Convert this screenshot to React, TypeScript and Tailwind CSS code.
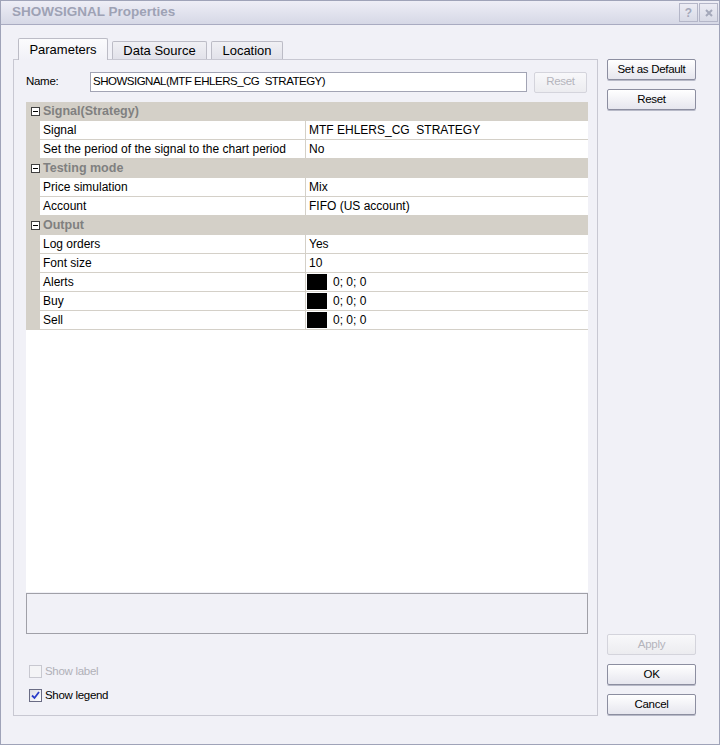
import React from "react";

interface PropRow {
  name: string;
  value: string;
  color?: boolean;
}

interface PropGroup {
  title: string;
  rows: PropRow[];
}

const groups: PropGroup[] = [
  {
    title: "Signal(Strategy)",
    rows: [
      { name: "Signal", value: "MTF EHLERS_CG  STRATEGY" },
      { name: "Set the period of the signal to the chart period", value: "No" },
    ],
  },
  {
    title: "Testing mode",
    rows: [
      { name: "Price simulation", value: "Mix" },
      { name: "Account", value: "FIFO (US account)" },
    ],
  },
  {
    title: "Output",
    rows: [
      { name: "Log orders", value: "Yes" },
      { name: "Font size", value: "10" },
      { name: "Alerts", value: "0; 0; 0", color: true },
      { name: "Buy", value: "0; 0; 0", color: true },
      { name: "Sell", value: "0; 0; 0", color: true },
    ],
  },
];

const WinButton: React.FC<{ label: string; disabled?: boolean; className?: string }> = ({
  label,
  disabled,
  className,
}) => (
  <div
    className={
      "flex h-[21px] items-center justify-center rounded-[2px] border bg-gradient-to-b text-[11.5px] tracking-[-0.3px] " +
      (disabled
        ? "border-[#d4d4dc] from-[#f8f8fa] to-[#ececf0] text-[#b4b4bc] "
        : "border-[#8c8ea0] from-[#ffffff] to-[#e6e6ee] text-black shadow-[0_1px_0_#b8bac8] ") +
      (className ?? "")
    }
  >
    {label}
  </div>
);

const MinusBox = () => (
  <div className="flex h-[9px] w-[9px] items-center justify-center border border-[#404040] bg-white">
    <div className="h-px w-[5px] bg-black" />
  </div>
);

const Checkbox: React.FC<{ checked?: boolean; disabled?: boolean; label: string }> = ({
  checked,
  disabled,
  label,
}) => (
  <div className="flex h-[13px] items-center gap-[3px]">
    <div
      className={
        "flex h-[13px] w-[13px] items-center justify-center border " +
        (disabled ? "border-[#c8c8d0] bg-[#f4f4f6]" : "border-[#6a6c84] bg-gradient-to-br from-[#dcdce4] to-white")
      }
    >
      {checked && (
        <svg width="9" height="9" viewBox="0 0 9 9">
          <path d="M1 4.5 L3.5 7 L8 1" fill="none" stroke="#2a3cc8" strokeWidth="1.8" />
        </svg>
      )}
    </div>
    <span className={"text-[11.5px] tracking-[-0.3px] " + (disabled ? "text-[#b0b0b8]" : "text-black")}>
      {label}
    </span>
  </div>
);

const App: React.FC = () => {
  return (
    <div className="flex h-[745px] w-[720px] flex-col border border-[#9fa3b8] bg-[#f1f1f7] font-['Liberation_Sans',Arial,sans-serif] text-black">
      {/* title bar */}
      <div className="flex h-[24px] items-center justify-between border-b border-[#a9abc1] bg-gradient-to-b from-[#eeeef6] to-[#d6d8e6] pl-[11px] pr-[1px]">
        <span className="text-[13.5px] font-bold text-[#9ea2b5]">SHOWSIGNAL Properties</span>
        <div className="flex gap-px">
          <div className="flex h-[19px] w-[19px] items-center justify-center border border-[#b4b6c8] bg-gradient-to-b from-[#ececf4] to-[#d8dae6] text-[12px] font-bold text-[#a4a8ba]">
            ?
          </div>
          <div className="flex h-[19px] w-[19px] items-center justify-center border border-[#b4b6c8] bg-gradient-to-b from-[#ececf4] to-[#d8dae6]">
            <svg width="8" height="8" viewBox="0 0 8 8">
              <path d="M1 1 L7 7 M7 1 L1 7" stroke="#a4a8ba" strokeWidth="2" />
            </svg>
          </div>
        </div>
      </div>

      <div className="flex flex-1 pl-[12px] pt-[13px]">
        {/* left: tabs + page */}
        <div className="flex w-[585px] flex-col">
          <div className="flex h-[21px] items-end gap-[4px] pl-[5px]">
            <div className="relative z-10 mb-[-1px] flex h-[22px] w-[90px] items-center justify-center rounded-t-[2px] border border-b-0 border-[#bcbcc6] bg-gradient-to-b from-[#fbfbfd] to-[#f1f1f7] text-[13px]">
              Parameters
            </div>
            <div className="flex h-[18px] w-[95px] items-center justify-center rounded-t-[2px] border border-b-0 border-[#bcbcc6] bg-gradient-to-b from-[#f0f0f4] to-[#e2e2ea] text-[13px]">
              Data Source
            </div>
            <div className="flex h-[18px] w-[72px] items-center justify-center rounded-t-[2px] border border-b-0 border-[#bcbcc6] bg-gradient-to-b from-[#f0f0f4] to-[#e2e2ea] text-[13px]">
              Location
            </div>
          </div>

          <div className="flex h-[657px] flex-col border border-[#c8c8d2] pl-[12px] pr-[9px] pt-[12px]">
            <div className="flex h-[20px] items-center">
              <span className="w-[64px] text-[11.5px] tracking-[-0.3px]">Name:</span>
              <div className="flex h-[20px] w-[437px] items-center whitespace-pre border border-[#a2a4b4] bg-white pl-[2px] text-[11.5px] tracking-[-0.5px]">
                SHOWSIGNAL(MTF EHLERS_CG  STRATEGY)
              </div>
              <WinButton label="Reset" disabled className="ml-[7px] h-[19px] w-[53px]" />
            </div>

            {/* property grid */}
            <div className="mt-[10px] flex h-[490px] flex-col bg-white">
              {groups.map((g) => (
                <div key={g.title}>
                  <div className="flex h-[19px] items-center bg-[#d4d0c8]">
                    <div className="flex w-[17px] justify-center pl-[2px]">
                      <MinusBox />
                    </div>
                    <span className="text-[12.5px] font-bold text-[#808080]">{g.title}</span>
                  </div>
                  {g.rows.map((r) => (
                    <div key={r.name} className="flex h-[19px] bg-[#d4d0c8]">
                      <div className="w-[14px]" />
                      <div className="flex w-[266px] items-center border-b border-r border-[#d4d0c8] bg-white pl-[3px] text-[12px]">
                        {r.name}
                      </div>
                      <div className="flex flex-1 items-center whitespace-pre border-b border-[#d4d0c8] bg-white pl-[1px] text-[12px]">
                        {r.color ? (
                          <div className="mr-[6px] h-[16px] w-[20px] bg-black" />
                        ) : (
                          <div className="w-[2px]" />
                        )}
                        {r.value}
                      </div>
                    </div>
                  ))}
                </div>
              ))}
            </div>

            {/* description */}
            <div className="mt-[1px] h-[41px] border border-[#a0a0a8]" />

            <div className="mt-[31px] flex flex-col gap-[11px] pl-[3px]">
              <Checkbox label="Show label" disabled />
              <Checkbox label="Show legend" checked />
            </div>
          </div>
        </div>

        {/* right: buttons */}
        <div className="ml-[9px] flex w-[89px] flex-col pt-[21px]">
          <WinButton label="Set as Default" />
          <WinButton label="Reset" className="mt-[9px]" />
          <div className="flex-1" />
          <WinButton label="Apply" disabled />
          <WinButton label="OK" className="mt-[9px]" />
          <WinButton label="Cancel" className="mt-[9px]" />
          <div className="h-[29px]" />
        </div>
      </div>
    </div>
  );
};

export default App;
